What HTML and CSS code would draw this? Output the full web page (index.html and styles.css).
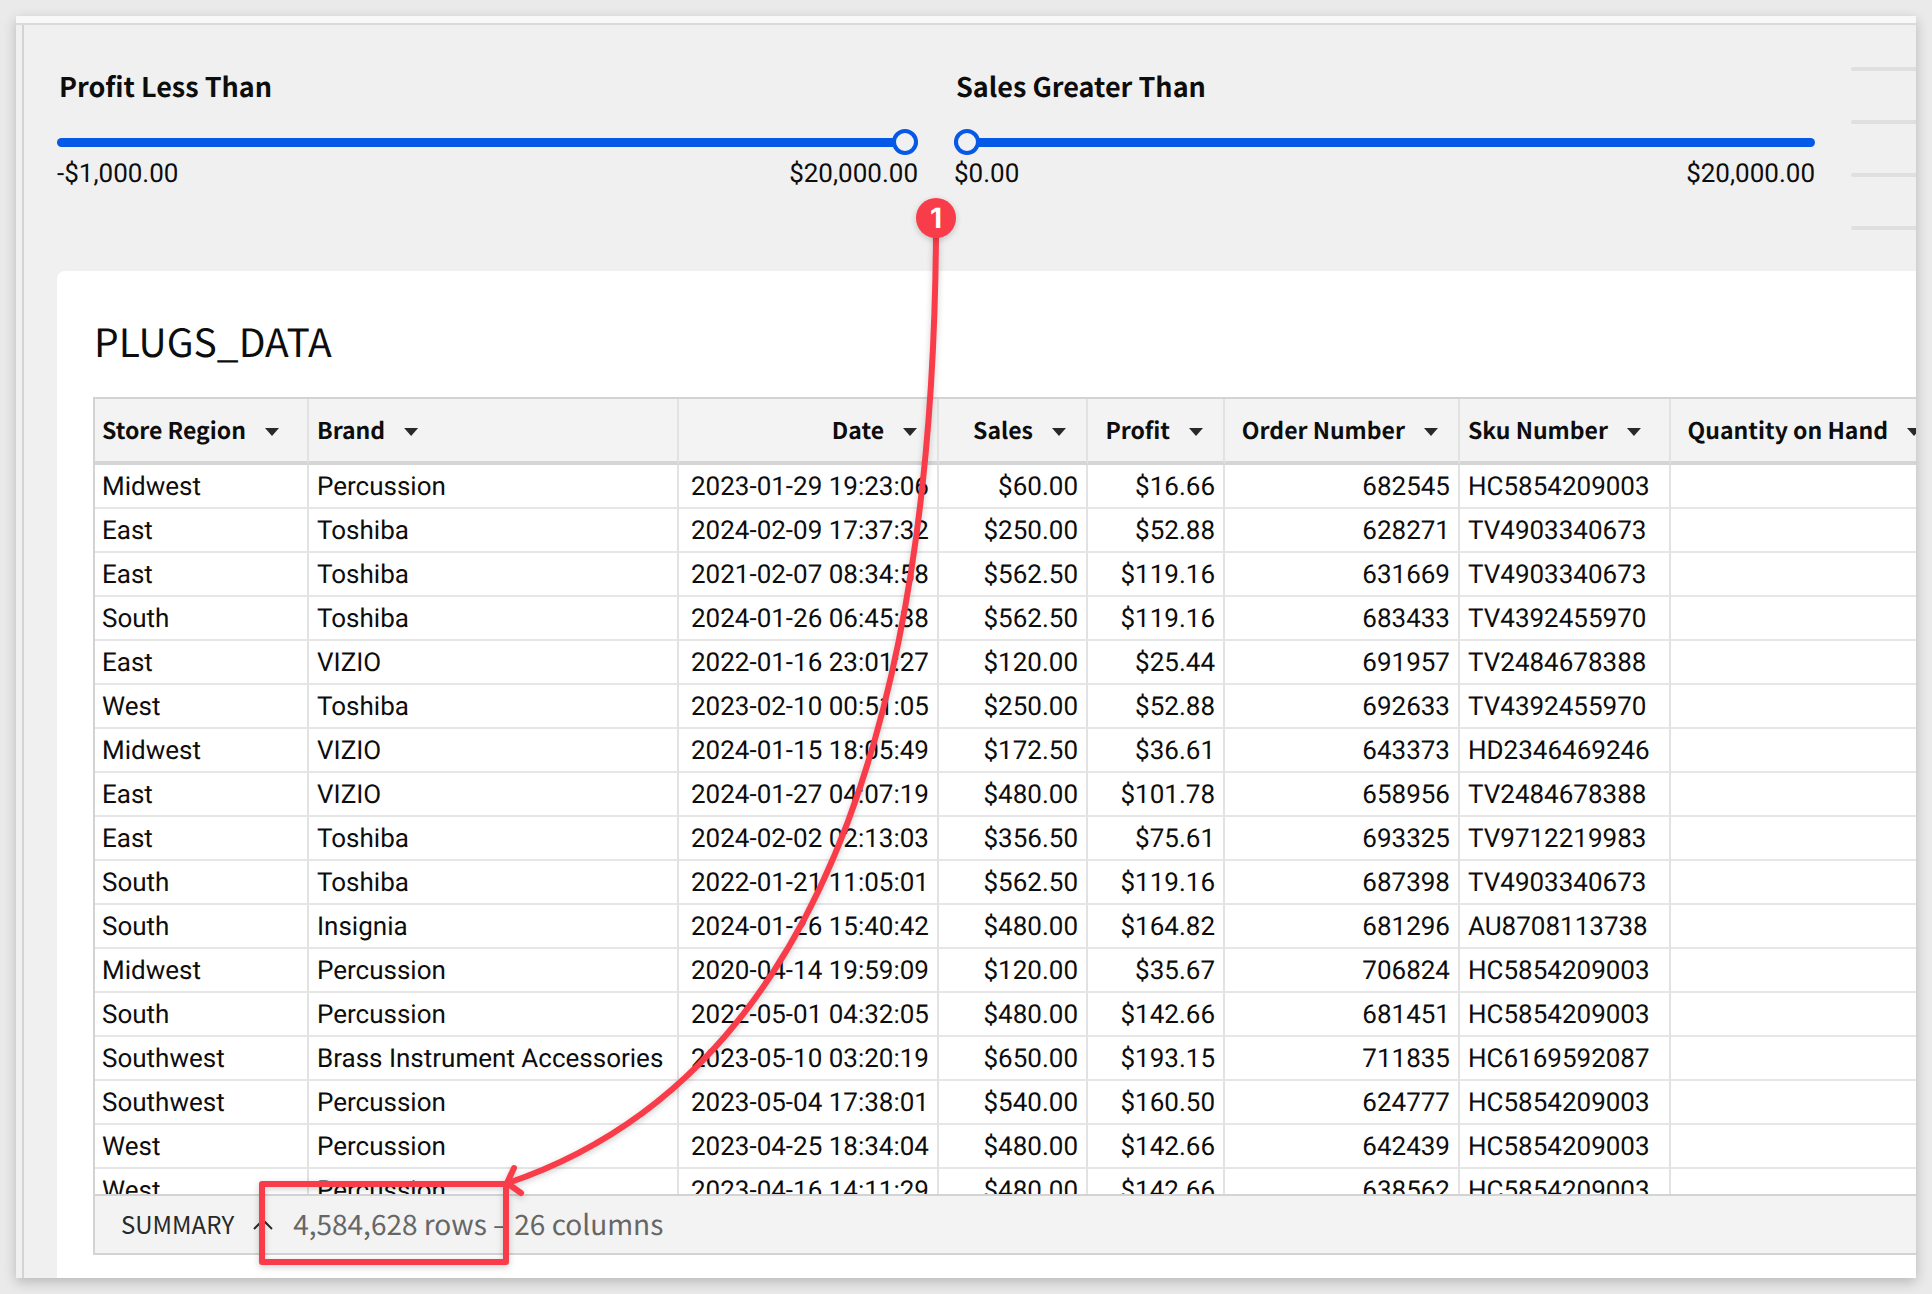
FILE: index.html
```html
<!DOCTYPE html>
<html lang="en">
<head>
<meta charset="utf-8">
<title>PLUGS_DATA</title>
<link rel="stylesheet" href="styles.css">
</head>
<body>
<main class="sheet">
  <div class="topbar"></div>
  <div class="canvas">
    <section class="filters">
      <div class="filter">
        <label class="filter-label" for="profit">Profit Less Than</label>
        <input class="slider" id="profit" type="range" min="-1000" max="20000" value="20000">
        <div class="range"><span>-$1,000.00</span><span>$20,000.00</span></div>
      </div>
      <div class="filter">
        <label class="filter-label" for="sales">Sales Greater Than</label>
        <input class="slider" id="sales" type="range" min="0" max="20000" value="0">
        <div class="range"><span>$0.00</span><span>$20,000.00</span></div>
      </div>
      <div class="skeleton"><i></i><i></i><i></i><i></i></div>
    </section>
    <section class="card">
      <h1 class="card-title">PLUGS_DATA</h1>
      <div class="grid">
        <div class="grid-body">
          <table class="data">
            <colgroup><col class="c-region"><col class="c-brand"><col class="c-date"><col class="c-sales"><col class="c-profit"><col class="c-order"><col class="c-sku"><col class="c-qty"></colgroup>
            <thead>
              <tr>
                <th>Store Region<button class="caret" aria-label="Store Region menu"></button></th>
                <th>Brand<button class="caret" aria-label="Brand menu"></button></th>
                <th class="num">Date<button class="caret" aria-label="Date menu"></button></th>
                <th class="num">Sales<button class="caret" aria-label="Sales menu"></button></th>
                <th class="num">Profit<button class="caret" aria-label="Profit menu"></button></th>
                <th class="num">Order Number<button class="caret" aria-label="Order Number menu"></button></th>
                <th>Sku Number<button class="caret" aria-label="Sku Number menu"></button></th>
                <th class="num">Quantity on Hand<button class="caret" aria-label="Quantity on Hand menu"></button></th>
              </tr>
            </thead>
            <tbody>
              <tr><td>Midwest</td><td>Percussion</td><td class="num">2023-01-29 19:23:06</td><td class="num">$60.00</td><td class="num">$16.66</td><td class="num">682545</td><td>HC5854209003</td><td></td></tr>
              <tr><td>East</td><td>Toshiba</td><td class="num">2024-02-09 17:37:32</td><td class="num">$250.00</td><td class="num">$52.88</td><td class="num">628271</td><td>TV4903340673</td><td></td></tr>
              <tr><td>East</td><td>Toshiba</td><td class="num">2021-02-07 08:34:58</td><td class="num">$562.50</td><td class="num">$119.16</td><td class="num">631669</td><td>TV4903340673</td><td></td></tr>
              <tr><td>South</td><td>Toshiba</td><td class="num">2024-01-26 06:45:38</td><td class="num">$562.50</td><td class="num">$119.16</td><td class="num">683433</td><td>TV4392455970</td><td></td></tr>
              <tr><td>East</td><td>VIZIO</td><td class="num">2022-01-16 23:01:27</td><td class="num">$120.00</td><td class="num">$25.44</td><td class="num">691957</td><td>TV2484678388</td><td></td></tr>
              <tr><td>West</td><td>Toshiba</td><td class="num">2023-02-10 00:51:05</td><td class="num">$250.00</td><td class="num">$52.88</td><td class="num">692633</td><td>TV4392455970</td><td></td></tr>
              <tr><td>Midwest</td><td>VIZIO</td><td class="num">2024-01-15 18:05:49</td><td class="num">$172.50</td><td class="num">$36.61</td><td class="num">643373</td><td>HD2346469246</td><td></td></tr>
              <tr><td>East</td><td>VIZIO</td><td class="num">2024-01-27 04:07:19</td><td class="num">$480.00</td><td class="num">$101.78</td><td class="num">658956</td><td>TV2484678388</td><td></td></tr>
              <tr><td>East</td><td>Toshiba</td><td class="num">2024-02-02 02:13:03</td><td class="num">$356.50</td><td class="num">$75.61</td><td class="num">693325</td><td>TV9712219983</td><td></td></tr>
              <tr><td>South</td><td>Toshiba</td><td class="num">2022-01-21 11:05:01</td><td class="num">$562.50</td><td class="num">$119.16</td><td class="num">687398</td><td>TV4903340673</td><td></td></tr>
              <tr><td>South</td><td>Insignia</td><td class="num">2024-01-26 15:40:42</td><td class="num">$480.00</td><td class="num">$164.82</td><td class="num">681296</td><td>AU8708113738</td><td></td></tr>
              <tr><td>Midwest</td><td>Percussion</td><td class="num">2020-04-14 19:59:09</td><td class="num">$120.00</td><td class="num">$35.67</td><td class="num">706824</td><td>HC5854209003</td><td></td></tr>
              <tr><td>South</td><td>Percussion</td><td class="num">2022-05-01 04:32:05</td><td class="num">$480.00</td><td class="num">$142.66</td><td class="num">681451</td><td>HC5854209003</td><td></td></tr>
              <tr><td>Southwest</td><td>Brass Instrument Accessories</td><td class="num">2023-05-10 03:20:19</td><td class="num">$650.00</td><td class="num">$193.15</td><td class="num">711835</td><td>HC6169592087</td><td></td></tr>
              <tr><td>Southwest</td><td>Percussion</td><td class="num">2023-05-04 17:38:01</td><td class="num">$540.00</td><td class="num">$160.50</td><td class="num">624777</td><td>HC5854209003</td><td></td></tr>
              <tr><td>West</td><td>Percussion</td><td class="num">2023-04-25 18:34:04</td><td class="num">$480.00</td><td class="num">$142.66</td><td class="num">642439</td><td>HC5854209003</td><td></td></tr>
              <tr><td>West</td><td>Percussion</td><td class="num">2023-04-16 14:11:29</td><td class="num">$480.00</td><td class="num">$142.66</td><td class="num">638562</td><td>HC5854209003</td><td></td></tr>
            </tbody>
          </table>
        </div>
        <div class="summary">
          <button class="summary-toggle">SUMMARY
            <svg width="20" height="12" viewBox="0 0 20 12" aria-hidden="true"><path d="M1 11 L10 2 L19 11" fill="none" stroke="#292929" stroke-width="2"/></svg>
          </button>
          <span class="count">4,584,628 rows – 26 columns</span>
        </div>
      </div>
    </section>
  </div>
  <svg class="annotation" width="960" height="1262" viewBox="16 16 960 1262" aria-hidden="true">
    <g fill="none" stroke="#f93c4a" stroke-width="6" stroke-linecap="round" stroke-linejoin="round">
      <rect x="262" y="1184" width="244" height="78"/>
      <path d="M936 236 Q930 1040 508 1183"/>
      <path d="M514 1168 L507 1183 L521 1193"/>
    </g>
  </svg>
  <span class="badge">1</span>
</main>
</body>
</html>
```
FILE: styles.css
```css
* { box-sizing: border-box; }

body {
  margin: 0;
  height: 100vh;
  padding: 16px;
  background: #eaeaea;
  color: #0d0d0d;
  font-family: Roboto, sans-serif;
  font-size: 26px;
  text-rendering: geometricPrecision;
}

button { border: 0; padding: 0; background: none; color: inherit; font: inherit; }

.sheet {
  position: relative;
  display: flex;
  flex-direction: column;
  height: 100%;
  background: #f0f0f0;
  box-shadow: 0 4px 12px rgba(0, 0, 0, 0.22);
}

.topbar { flex: none; height: 9px; background: #f8f8f8; border-bottom: 2px solid #dadada; }

.canvas {
  flex: 1;
  min-height: 0;
  display: flex;
  flex-direction: column;
  margin-left: 6px;
  padding-left: 33px;
  border-left: 2px solid #d3d3d3;
  overflow: hidden;
}

.filters {
  flex: none;
  display: grid;
  grid-template-columns: 1fr 1fr 65px;
  gap: 36px;
  height: 246px;
  padding-top: 42px;
}

.filter { display: flex; flex-direction: column; min-width: 0; }

.filter-label {
  padding-left: 2px;
  font: 700 27px/38px "Noto Sans CJK SC", sans-serif;
}

.slider {
  appearance: none;
  width: 100%;
  height: 26px;
  margin: 24px 0 0;
  background: none;
}
.slider::-webkit-slider-runnable-track { height: 9px; border-radius: 5px; background: #0559e6; }
.slider::-webkit-slider-thumb {
  appearance: none;
  width: 26px;
  height: 26px;
  margin-top: -9px;
  border: 4px solid #0559e6;
  border-radius: 50%;
  background: #f0f0f0;
}

.range { display: flex; justify-content: space-between; line-height: 38px; }

.skeleton { display: flex; flex-direction: column; gap: 49px; }
.skeleton i { height: 4px; border-radius: 2px 0 0 2px; background: #dfdfdf; }

.card {
  flex: 1;
  min-height: 0;
  display: flex;
  flex-direction: column;
  padding: 44px 0 23px 36px;
  border-radius: 8px 0 0 0;
  background: #fff;
}

.card-title {
  flex: none;
  margin: 0;
  padding-left: 1px;
  font: 400 39px/52px "Noto Sans CJK SC", sans-serif;
}

.grid {
  flex: 1;
  min-height: 0;
  display: flex;
  flex-direction: column;
  margin-top: 30px;
  border: solid #d3d3d3;
  border-width: 2px 0 2px 2px;
}

.grid-body { flex: 1; min-height: 0; overflow: hidden; }

.data { width: 1848px; table-layout: fixed; border-collapse: separate; border-spacing: 0; }
.c-region { width: 214px; }
.c-brand { width: 370px; }
.c-date { width: 260px; }
.c-sales { width: 149px; }
.c-profit { width: 137px; }
.c-order { width: 235px; }
.c-sku { width: 211px; }
.c-qty { width: 272px; }

.data th, .data td {
  padding: 0 8px;
  border-right: 2px solid #e2e2e2;
  border-bottom: 2px solid #e6e6e6;
  text-align: left;
  white-space: nowrap;
}
.data th {
  height: 66px;
  padding-bottom: 2px;
  border-bottom: 4px solid #d5d5d5;
  background: #f3f3f3;
  font: 700 23px/36px "Noto Sans CJK SC", sans-serif;
}
.data td { height: 44px; padding-top: 2px; line-height: 40px; }
.data th:first-child, .data td:first-child { padding-left: 7px; }
.data .num { text-align: right; }
.data th.num { padding-right: 20px; }

.caret {
  width: 14px;
  height: 8px;
  margin-left: 19px;
  vertical-align: 3px;
  background: #292929;
  clip-path: polygon(0 0, 100% 0, 50% 100%);
}

.summary {
  flex: none;
  display: flex;
  align-items: center;
  gap: 20px;
  height: 59px;
  padding: 0 0 1px 26px;
  border-top: 2px solid #d3d3d3;
  background: #f3f3f3;
  font-family: "Noto Sans CJK SC", sans-serif;
}
.summary-toggle { display: flex; align-items: center; gap: 19px; color: #292929; font-size: 24px; line-height: 36px; }
.count { color: #666; font-size: 28px; line-height: 36px; }

.annotation {
  position: absolute;
  left: 0;
  top: 0;
  pointer-events: none;
  filter: drop-shadow(0 2px 3px rgba(0, 0, 0, 0.2));
}

.badge {
  position: absolute;
  left: 900px;
  top: 182px;
  width: 40px;
  height: 40px;
  border-radius: 50%;
  background: #f93c4a;
  color: #fff;
  font: 700 28px/40px Inter, sans-serif;
  text-align: center;
  box-shadow: 0 2px 6px rgba(0, 0, 0, 0.2);
}
```
